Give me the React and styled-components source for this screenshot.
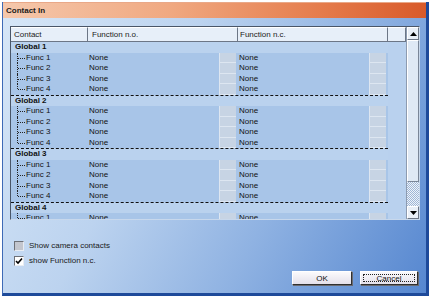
import React from 'react';
import styled, { createGlobalStyle } from 'styled-components';

const GlobalStyle = createGlobalStyle`
    body {
        margin: 0;
        background: #ffffff;
        font-family: "Liberation Sans", Arial, sans-serif;
        font-size: 8px;
        color: #000;
    }
`

const Window = styled.div`
    margin: 2px 0 0 2px;
    width: 427px;
    height: 294px;
    box-sizing: border-box;
    display: flex;
    flex-direction: column;
    border-left: 1px solid #3e6ab6;
    border-right: 3px solid #1e4a9a;
    border-bottom: 3px solid #1e4a9a;
`

const TitleBar = styled.div`
    height: 16px;
    box-sizing: border-box;
    border-top: 1px solid #e9a888;
    padding-left: 3px;
    display: flex;
    align-items: center;
    font-weight: bold;
    color: #1a1a1a;
    background: linear-gradient(to right, #f5c8ac 0%, #f0a880 40%, #e57c4c 75%, #d85a2a 100%);
`

const Body = styled.div`
    flex: 1;
    display: flex;
    flex-direction: column;
    padding: 8px 6px 8px 7px;
    background: linear-gradient(118deg, #d6e6f7 0%, #bcd3ef 35%, #8fb2e2 65%, #5687d0 100%);
`

const ListBox = styled.div`
    width: 410px;
    height: 194px;
    box-sizing: border-box;
    display: flex;
    border: 1px solid #4a5668;
    border-right-color: #c8d8ec;
    border-bottom-color: #c8d8ec;
    background: #b9d1ee;
    overflow: hidden;
`

const ListContent = styled.div`
    flex: 1;
    display: flex;
    flex-direction: column;
    overflow: hidden;
`

const Header = styled.div`
    display: grid;
    grid-template-columns: 77px 150px 150px 1fr;
    height: 15px;
    flex-shrink: 0;
`

const HeaderCell = styled.div`
    box-sizing: border-box;
    padding-left: ${props => props.$pad || 3}px;
    display: flex;
    align-items: center;
    background: #e7eff9;
    border-right: 1px solid #6c7686;
    border-bottom: 1px solid #6c7686;
    border-top: 1px solid #ffffff;
    color: #222;
`

const Rows = styled.div`
    width: 377px;
`

const Group = styled.div`
    border-bottom: 1px dashed #111;
`

const Row = styled.div`
    display: grid;
    grid-template-columns: 77px 150px 150px;
    height: 10.5px;
    line-height: 10.5px;
    background: ${props => props.$global ? '#bad2ee' : '#a8c5e8'};
`

const GlobalLabel = styled.div`
    padding-left: 4px;
    font-weight: bold;
    color: #111;
`

const FuncLabel = styled.div`
    display: flex;
    height: 100%;
    padding-left: 6px;
    color: #111;
`

const Branch = styled.span`
    position: relative;
    width: 9px;
    height: 100%;
    flex-shrink: 0;
    &::before {
        content: "";
        position: absolute;
        left: 0;
        top: 0;
        height: ${props => props.$last ? '50%' : '100%'};
        border-left: 1px dotted #222;
    }
    &::after {
        content: "";
        position: absolute;
        left: 1px;
        top: 50%;
        width: 7px;
        border-top: 1px dotted #222;
    }
`

const ValueCell = styled.div`
    display: flex;
    justify-content: space-between;
    height: 100%;
    padding-left: 1px;
    color: #111;
`

const PickBox = styled.span`
    width: 17px;
    height: 100%;
    box-sizing: border-box;
    margin-right: 2px;
    background: #c7d4e4;
    border-bottom: 1px solid #dde6f1;
    border-left: 1px solid #dde6f1;
`

const Scrollbar = styled.div`
    width: 12px;
    display: flex;
    flex-direction: column;
    border-left: 1px solid #8d9bb0;
    background-color: #e6edf6;
    background-image: repeating-conic-gradient(#eef3f9 0 25%, #9fb6d6 0 50%);
    background-size: 2px 2px;
`

const ScrollButton = styled.div`
    height: 13px;
    flex-shrink: 0;
    box-sizing: border-box;
    display: flex;
    align-items: center;
    justify-content: center;
    background: #e9eff7;
    border: 1px solid #ffffff;
    border-right-color: #6c7686;
    border-bottom-color: #6c7686;
`

const Thumb = styled.div`
    height: 142px;
    flex-shrink: 0;
    box-sizing: border-box;
    background: #dfe9f5;
    border: 1px solid #ffffff;
    border-right-color: #7a8698;
    border-bottom-color: #7a8698;
`

const Track = styled.div`
    flex: 1;
`

const Options = styled.div`
    margin-top: 18px;
    display: flex;
    flex-direction: column;
`

const OptionRow = styled.div`
    height: 15px;
    display: flex;
    align-items: center;
    gap: 5px;
    padding-left: 4px;
    color: #1a1a1a;
`

const OptionText = styled.span`
    line-height: 10px;
`

const CheckBox = styled.span`
    width: 10px;
    height: 10px;
    box-sizing: border-box;
    display: flex;
    align-items: center;
    justify-content: center;
    background: ${props => props.$checked ? '#ffffff' : '#c3c6ce'};
    border: 1px solid #6e7178;
    border-right-color: #e8ecf2;
    border-bottom-color: #e8ecf2;
`

const Footer = styled.div`
    margin-top: 3px;
    display: flex;
    justify-content: flex-end;
    gap: 8px;
    padding-right: 2px;
`

const Button = styled.button`
    width: ${props => props.$w}px;
    height: 14px;
    padding: 0;
    box-sizing: border-box;
    font-family: "Liberation Sans", Arial, sans-serif;
    font-size: 8px;
    color: #111;
    background: linear-gradient(#fbfafc, #e4e0ea);
    border: 1px solid #ffffff;
    border-right-color: #303030;
    border-bottom-color: #303030;
    box-shadow: 1px 1px 0 #6a6a70;
    display: flex;
    align-items: center;
    justify-content: center;
`

const Focus = styled.span`
    display: flex;
    align-items: center;
    justify-content: center;
    width: calc(100% - 4px);
    height: calc(100% - 4px);
    border: 1px dotted #222;
    box-sizing: border-box;
`

const Arrow = ({ down }) => (
    <svg width="7" height="4" viewBox="0 0 7 4">
        <path d={down ? 'M0 0H7L3.5 4Z' : 'M0 4H7L3.5 0Z'} fill="#000" />
    </svg>
)

// only the rows that show inside the list box
const groups = [
    { name: 'Global 1', count: 4 },
    { name: 'Global 2', count: 4 },
    { name: 'Global 3', count: 4 },
    { name: 'Global 4', count: 1 },
];

const App = () => {
  return (
    <>
      <GlobalStyle />
      <Window>
        <TitleBar>Contact In</TitleBar>
        <Body>
          <ListBox>
            <ListContent>
              <Header>
                <HeaderCell $pad={3}>Contact</HeaderCell>
                <HeaderCell $pad={4}>Function n.o.</HeaderCell>
                <HeaderCell $pad={2}>Function n.c.</HeaderCell>
                <HeaderCell />
              </Header>
              <Rows>
                {groups.map(g => (
                  <Group key={g.name}>
                    <Row $global>
                      <GlobalLabel>{g.name}</GlobalLabel>
                      <div />
                      <div />
                    </Row>
                    {Array.from({ length: g.count }, (_, i) => (
                      <Row key={i}>
                        <FuncLabel>
                          <Branch $last={i === 3} />
                          Func {i + 1}
                        </FuncLabel>
                        <ValueCell>None<PickBox /></ValueCell>
                        <ValueCell>None<PickBox /></ValueCell>
                      </Row>
                    ))}
                  </Group>
                ))}
              </Rows>
            </ListContent>
            <Scrollbar>
              <ScrollButton><Arrow /></ScrollButton>
              <Thumb />
              <Track />
              <ScrollButton><Arrow down /></ScrollButton>
            </Scrollbar>
          </ListBox>
          <Options>
            <OptionRow>
              <CheckBox />
              <OptionText>Show camera contacts</OptionText>
            </OptionRow>
            <OptionRow>
              <CheckBox $checked>
                <svg width="8" height="8" viewBox="0 0 8 8">
                  <path d="M1 4L3 6L7 1.5" stroke="#000" strokeWidth="1.6" fill="none" />
                </svg>
              </CheckBox>
              <OptionText>show Function n.c.</OptionText>
            </OptionRow>
          </Options>
          <Footer>
            <Button $w={60}>OK</Button>
            <Button $w={58}><Focus>Cancel</Focus></Button>
          </Footer>
        </Body>
      </Window>
    </>
  )
};

export default App;
